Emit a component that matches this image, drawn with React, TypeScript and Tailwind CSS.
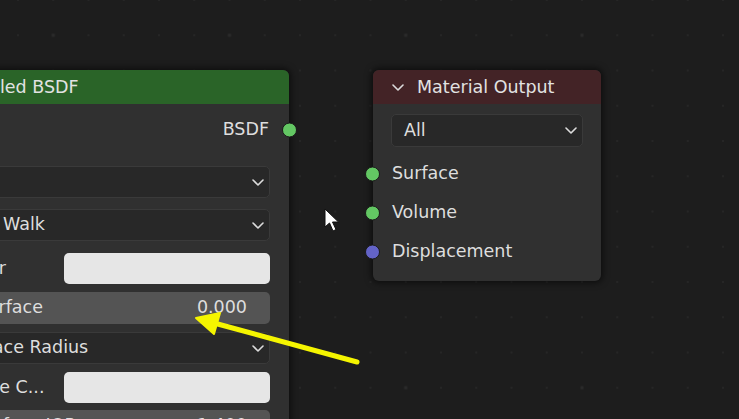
import React from 'react';

// small chevron used in headers and dropdowns
function Chevron({ className = '' }: { className?: string }) {
  return (
    <svg width="12" height="7" viewBox="0 0 12 7" className={className}>
      <polyline points="1,1 6,6 11,1" fill="none" stroke="#dcdcdc" strokeWidth="1.6" strokeLinecap="round" strokeLinejoin="round" />
    </svg>
  );
}

function Socket({ color, side }: { color: string; side: 'left' | 'right' }) {
  return (
    <span
      className={`absolute top-1/2 -translate-y-1/2 w-[15px] h-[15px] rounded-full border border-[#1a1a1a] ${side === 'left' ? 'left-[-8px]' : 'right-[-8px]'}`}
      style={{ backgroundColor: color }}
    />
  );
}

function Dropdown({ label, pad = 'pl-[12px]', className = '' }: { label: string; pad?: string; className?: string }) {
  return (
    <div className={`flex items-center justify-between h-[32px] rounded-[5px] bg-[#282828] border border-[#3a3a3a] pr-[5px] ${pad} ${className}`}>
      <span className="whitespace-nowrap">{label}</span>
      <Chevron />
    </div>
  );
}

function Slider({ label, value, pad, className = '' }: { label: string; value: string; pad: string; className?: string }) {
  return (
    <div className={`flex items-center justify-between h-[32px] rounded-[5px] bg-[#545454] pr-[23px] ${pad} ${className}`}>
      <span className="whitespace-nowrap">{label}</span>
      <span>{value}</span>
    </div>
  );
}

function ColorRow({ label, className = '' }: { label: string; className?: string }) {
  return (
    <div className={`flex items-center h-[31px] ${className}`}>
      <span className="w-[152px] shrink-0 whitespace-nowrap overflow-hidden">{label}</span>
      <div className="flex-1 h-full rounded-[5px] bg-[#e6e6e6]" />
    </div>
  );
}

function GridDots() {
  return (
    <svg className="absolute inset-0" width="739" height="419">
      <defs>
        <pattern id="minor" x="18" y="0" width="35.25" height="35.25" patternUnits="userSpaceOnUse">
          <rect x="-1" y="-1" width="2" height="2" fill="#262626" />
          <rect x="34.25" y="-1" width="2" height="2" fill="#262626" />
          <rect x="-1" y="34.25" width="2" height="2" fill="#262626" />
          <rect x="34.25" y="34.25" width="2" height="2" fill="#262626" />
        </pattern>
        <pattern id="major" x="53.25" y="35.25" width="176.25" height="176.25" patternUnits="userSpaceOnUse">
          <rect x="-1.5" y="-1.5" width="3" height="3" fill="#2a2a2a" />
          <rect x="174.75" y="-1.5" width="3" height="3" fill="#2a2a2a" />
          <rect x="-1.5" y="174.75" width="3" height="3" fill="#2a2a2a" />
          <rect x="174.75" y="174.75" width="3" height="3" fill="#2a2a2a" />
        </pattern>
      </defs>
      <rect width="739" height="419" fill="url(#minor)" />
      <rect width="739" height="419" fill="url(#major)" />
    </svg>
  );
}

export default function App() {
  return (
    <div className="relative w-[739px] h-[419px] overflow-hidden bg-[#1d1d1d] text-[#dedede] text-[17.5px] font-['DejaVu_Sans',sans-serif] leading-none">
      <GridDots />

      {/* Principled BSDF node, mostly off the left edge */}
      <div className="absolute left-[-96px] top-[70px] w-[385px] rounded-[6px] bg-[#303030] shadow-[0_0_6px_2px_rgba(0,0,0,0.55)] pb-[20px]">
        <div className="flex items-center h-[34px] rounded-t-[6px] bg-[#2a6428] text-[#e2e2e2]">
          <span className="w-[37px] pl-[14px]"><Chevron /></span>
          <span className="pt-[1px]">Principled BSDF</span>
        </div>

        <div className="relative flex items-center justify-end h-[26px] mt-[13px] pr-[20px]">
          <span>BSDF</span>
          <Socket color="#63c763" side="right" />
        </div>

        <div className="pl-[13px] pr-[19px] flex flex-col">
          <Dropdown label="GGX" className="mt-[23px]" />
          <Dropdown label="Random Walk" pad="pl-[7px]" className="mt-[11px]" />
          <ColorRow label="Base Color" className="mt-[12px] -ml-[5px]" />
          <Slider label="Subsurface" value="0.000" pad="pl-[28px]" className="mt-[8px]" />
          <Dropdown label="Subsurface Radius" pad="pl-[8px]" className="mt-[8px] h-[31px]" />
          <ColorRow label="Subsurface C..." className="mt-[8px] -ml-[5px]" />
          <Slider label="Subsurface IOR" value="1.400" pad="pl-[25px]" className="mt-[7px]" />
        </div>
      </div>

      {/* Material Output node */}
      <div className="absolute left-[373px] top-[70px] w-[228px] h-[211px] rounded-[6px] bg-[#303030] shadow-[0_0_6px_2px_rgba(0,0,0,0.55)]">
        <div className="flex items-center h-[34px] rounded-t-[6px] bg-[#432326] text-[#e2e2e2]">
          <span className="w-[44px] pl-[19px]"><Chevron /></span>
          <span className="pt-[1px]">Material Output</span>
        </div>
        <div className="px-[18px] mt-[10px]">
          <Dropdown label="All" className="h-[33px]" />
        </div>
        <div className="mt-[7px] flex flex-col">
          {[
            { label: 'Surface', color: '#63c763' },
            { label: 'Volume', color: '#63c763' },
            { label: 'Displacement', color: '#6363c7' },
          ].map((s) => (
            <div key={s.label} className="relative flex items-center h-[39px] pl-[19px]">
              <Socket color={s.color} side="left" />
              <span>{s.label}</span>
            </div>
          ))}
        </div>
      </div>

      {/* annotation arrow */}
      <svg className="absolute inset-0 pointer-events-none" width="739" height="419">
        <line x1="357" y1="362" x2="214" y2="323" stroke="#f5f500" strokeWidth="5" strokeLinecap="round" />
        <polygon points="196,318 220,313 214,334" fill="#f5f500" stroke="#f5f500" strokeWidth="2" strokeLinejoin="round" />
      </svg>

      {/* mouse cursor */}
      <svg className="absolute left-[324px] top-[208px]" width="18" height="26" viewBox="0 0 18 26">
        <path d="M1 1 L1 19 L5.5 15 L9 23 L12 21.5 L8.5 14 L14.5 14 Z" fill="#ffffff" stroke="#111111" strokeWidth="1" strokeLinejoin="round" />
      </svg>
    </div>
  );
}
